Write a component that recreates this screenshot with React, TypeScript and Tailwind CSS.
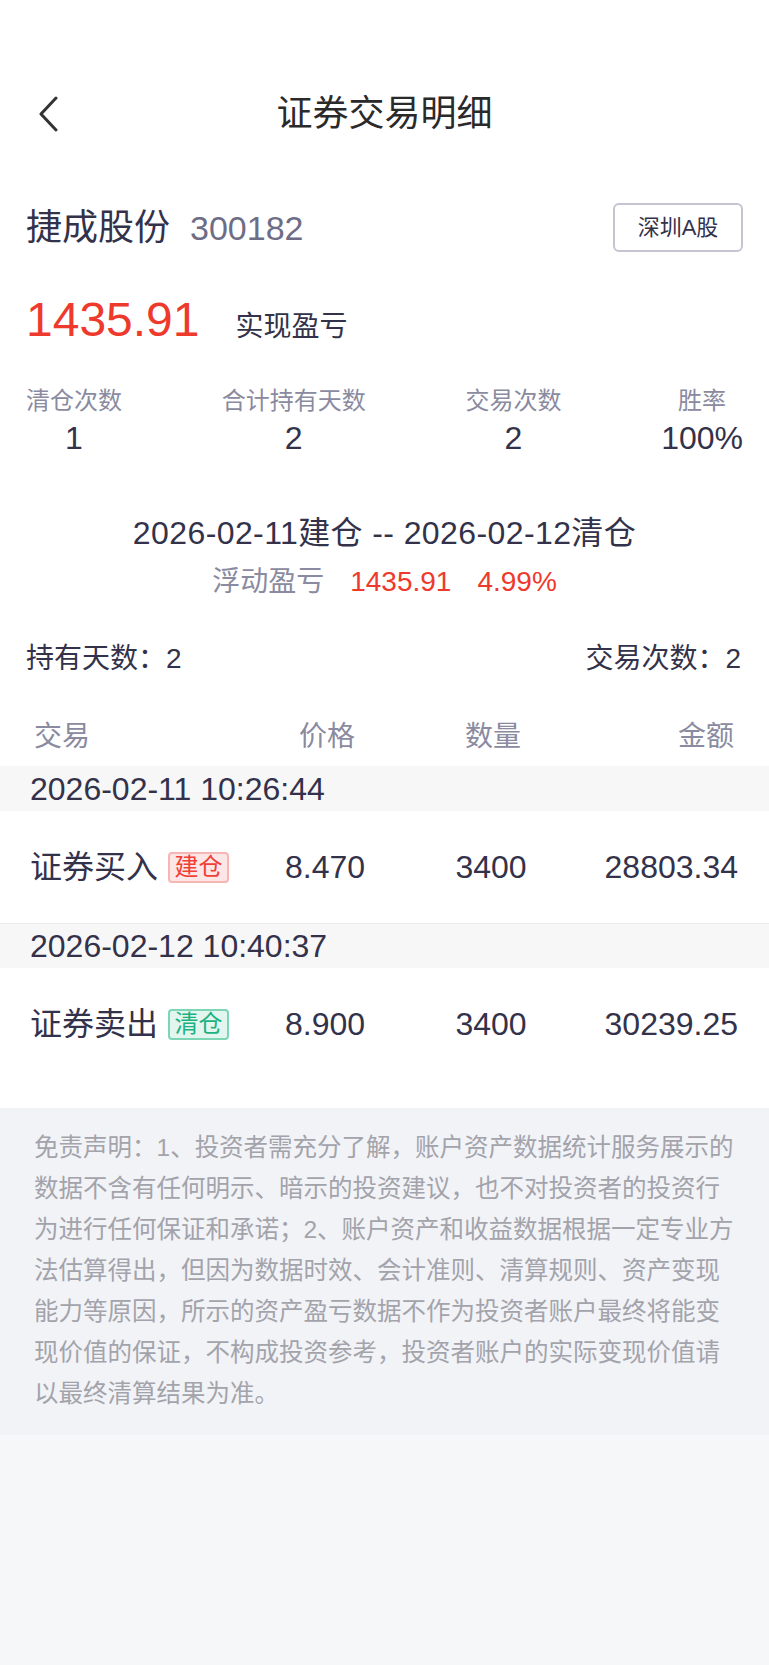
const font = {
  fontFamily: '"Liberation Sans", "Noto Sans CJK SC", sans-serif',
};

const disclaimerLines = [
  '免责声明：1、投资者需充分了解，账户资产数据统计服务展示的',
  '数据不含有任何明示、暗示的投资建议，也不对投资者的投资行',
  '为进行任何保证和承诺；2、账户资产和收益数据根据一定专业方',
  '法估算得出，但因为数据时效、会计准则、清算规则、资产变现',
  '能力等原因，所示的资产盈亏数据不作为投资者账户最终将能变',
  '现价值的保证，不构成投资参考，投资者账户的实际变现价值请',
  '以最终清算结果为准。',
];

const stats = [
  { label: '清仓次数', value: '1' },
  { label: '合计持有天数', value: '2' },
  { label: '交易次数', value: '2' },
  { label: '胜率', value: '100%' },
];

interface Trade {
  time: string;
  name: string;
  tag: string;
  kind: 'buy' | 'sell';
  price: string;
  qty: string;
  amount: string;
}

const trades: Trade[] = [
  {
    time: '2026-02-11 10:26:44',
    name: '证券买入',
    tag: '建仓',
    kind: 'buy',
    price: '8.470',
    qty: '3400',
    amount: '28803.34',
  },
  {
    time: '2026-02-12 10:40:37',
    name: '证券卖出',
    tag: '清仓',
    kind: 'sell',
    price: '8.900',
    qty: '3400',
    amount: '30239.25',
  },
];

function BackIcon() {
  return (
    <svg width="22" height="36" viewBox="0 0 22 36" fill="none">
      <path
        d="M19 2 L4 18 L19 34"
        stroke="#333333"
        strokeWidth="3"
        strokeLinecap="round"
        strokeLinejoin="round"
      />
    </svg>
  );
}

function TradeRow({ trade, first }: { trade: Trade; first: boolean }) {
  const tagClass =
    trade.kind === 'buy'
      ? 'bg-[#fde6e6] border-[#f5b6b4] text-[#ef4036]'
      : 'bg-[#e2f5ef] border-[#7cd6b6] text-[#1cb27f]';

  return (
    <div>
      <div
        className={`h-[45px] flex items-center bg-[#f7f7f7] pl-[30px] text-[32px] leading-none text-[#33324a] ${
          first ? '' : 'border-t border-[#ececec]'
        }`}
      >
        {trade.time}
      </div>
      <div className="h-[112px] grid grid-cols-[220px_150px_182px_1fr] items-center pl-[30px] pr-[31px] text-[32px] leading-none text-[#33324a]">
        <div className="flex items-center">
          <span>{trade.name}</span>
          <span
            className={`ml-[10px] h-[31px] w-[61px] flex items-center justify-center rounded-[4px] border-2 text-[24px] leading-none ${tagClass}`}
          >
            {trade.tag}
          </span>
        </div>
        <div className="text-center">{trade.price}</div>
        <div className="text-center">{trade.qty}</div>
        <div className="text-right">{trade.amount}</div>
      </div>
    </div>
  );
}

export default function App() {
  return (
    <div className="min-h-[1665px] bg-[#f6f7f9] flex flex-col" style={font}>
      <div className="bg-white">
        <div className="pt-[74px] h-[154px] relative flex items-center justify-center">
          <div className="absolute left-[37px] top-[96px]">
            <BackIcon />
          </div>
          <h1 className="text-[36px] leading-none text-[#2a2a2a]">证券交易明细</h1>
        </div>

        <div className="px-[26px]">
          <div className="mt-[49px] flex items-center justify-between">
            <div className="flex items-baseline">
              <span className="text-[36px] leading-none text-[#33324a]">捷成股份</span>
              <span className="ml-[20px] text-[34px] leading-none text-[#6e6d86]">300182</span>
            </div>
            <div className="h-[49px] w-[130px] flex items-center justify-center rounded-[6px] border-2 border-[#c4c4d2] text-[22px] text-[#33324a]">
              深圳A股
            </div>
          </div>

          <div className="mt-[44px] flex items-baseline">
            <span className="text-[48px] leading-none text-[#ee3a2c]">1435.91</span>
            <span className="ml-[36px] text-[28px] leading-none text-[#33324a]">实现盈亏</span>
          </div>

          <div className="mt-[43px] flex justify-between">
            {stats.map((s) => (
              <div key={s.label} className="flex flex-col items-center">
                <span className="text-[24px] leading-[28px] text-[#8a8aa0]">{s.label}</span>
                <span className="mt-[7px] text-[32px] leading-none text-[#33324a]">{s.value}</span>
              </div>
            ))}
          </div>

          <div className="mt-[60px] text-center text-[32px] tracking-[0.4px] leading-[38px] text-[#33324a]">
            2026-02-11建仓 -- 2026-02-12清仓
          </div>
          <div className="mt-[13px] flex justify-center gap-[26px] text-[28px] leading-[34px]">
            <span className="text-[#8a8aa0]">浮动盈亏</span>
            <span className="text-[#ee3a2c]">1435.91</span>
            <span className="text-[#ee3a2c]">4.99%</span>
          </div>

          <div className="mt-[43px] flex justify-between pr-[2px] text-[28px] leading-[34px] text-[#33324a]">
            <span>持有天数：2</span>
            <span>交易次数：2</span>
          </div>
        </div>

        <div className="mt-[44px] grid grid-cols-[220px_150px_182px_1fr] pl-[34px] pr-[35px] text-[28px] leading-[34px] text-[#8a8aa0]">
          <div>交易</div>
          <div className="text-center -ml-[4px]">价格</div>
          <div className="text-center -ml-[4px]">数量</div>
          <div className="text-right">金额</div>
        </div>

        <div className="mt-[12px] pb-[28px]">
          {trades.map((t, i) => (
            <TradeRow key={t.time} trade={t} first={i === 0} />
          ))}
        </div>
      </div>

      <div className="bg-[#f2f3f7] pl-[34px] pr-[30px] pt-[19px] pb-[21px] text-[24.5px] leading-[41px] text-[#a3a3ab]">
        {disclaimerLines.map((line) => (
          <div key={line} className="whitespace-nowrap">
            {line}
          </div>
        ))}
      </div>
    </div>
  );
}
